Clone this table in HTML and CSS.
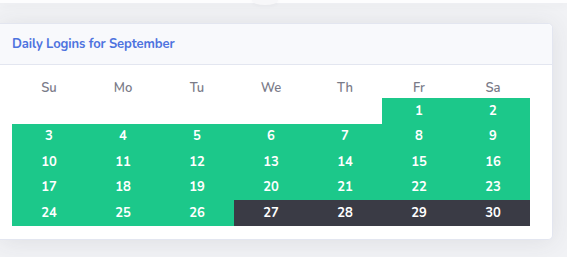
FILE: index.html
```html
<!DOCTYPE html>
<html>
<head>
<meta charset="utf-8">
<link rel="stylesheet" href="styles.css">
</head>
<body>
<div class="topbar"><div class="bump"></div></div>
<div class="card">
  <div class="card-header">Daily Logins for September</div>
  <div class="card-body">
    <div class="cal">
      <div class="dn">Su</div><div class="dn">Mo</div><div class="dn">Tu</div><div class="dn">We</div><div class="dn">Th</div><div class="dn">Fr</div><div class="dn">Sa</div>
      <div class="e"></div><div class="e"></div><div class="e"></div><div class="e"></div><div class="e"></div><div class="g">1</div><div class="g">2</div>
      <div class="g">3</div><div class="g">4</div><div class="g">5</div><div class="g">6</div><div class="g">7</div><div class="g">8</div><div class="g">9</div>
      <div class="g">10</div><div class="g">11</div><div class="g">12</div><div class="g">13</div><div class="g">14</div><div class="g">15</div><div class="g">16</div>
      <div class="g">17</div><div class="g">18</div><div class="g">19</div><div class="g">20</div><div class="g">21</div><div class="g">22</div><div class="g">23</div>
      <div class="g">24</div><div class="g">25</div><div class="g">26</div><div class="d">27</div><div class="d">28</div><div class="d">29</div><div class="d">30</div>
    </div>
  </div>
</div>
</body>
</html>
```
FILE: styles.css
```css
html, body { margin: 0; padding: 0; }
body {
  width: 567px;
  height: 257px;
  overflow: hidden;
  background: #f1f2f5;
  font-family: "Nunito", "Lato", "Noto Sans", sans-serif;
  position: relative;
}
.topbar {
  height: 3px;
  background: #fdfdfe;
  box-shadow: 0 2px 10px rgba(58,59,69,0.06);
  position: relative;
}
.bump {
  position: absolute;
  left: 252px;
  top: -4px;
  width: 26px;
  height: 9px;
  border-radius: 50%;
  background: #f7f7f9;
  box-shadow: 0 1px 4px rgba(58,59,69,0.04);
}
.card {
  margin-top: 20px;
  width: 553px;
  background: #fff;
  border: 1px solid #e3e6f0;
  border-left: none;
  border-radius: 0 5px 5px 0;
  box-shadow: 0 2px 24px rgba(58,59,69,0.10);
  box-sizing: border-box;
}
.card-header {
  height: 41px;
  box-sizing: border-box;
  background: #f8f9fc;
  border-bottom: 1px solid #e3e6f0;
  padding-left: 12px;
  display: flex;
  align-items: center;
  color: #4e73df;
  font-weight: 700;
  font-size: 13px;
  letter-spacing: -0.1px;
  border-radius: 0 5px 0 0;
}
.card-body {
  padding: 12px 0 13px 12px;
}
.cal {
  width: 518px;
  display: grid;
  grid-template-columns: repeat(7, 74px);
  grid-template-rows: 21px repeat(5, 25.5px);
}
.cal > div {
  display: flex;
  align-items: center;
  justify-content: center;
  font-size: 13px;
}
.dn { color: #7a7b88; font-weight: 600; }
.g { background: #1cc88a; color: #fff; font-weight: 700; }
.d { background: #3a3b45; color: #fff; font-weight: 700; }
```
